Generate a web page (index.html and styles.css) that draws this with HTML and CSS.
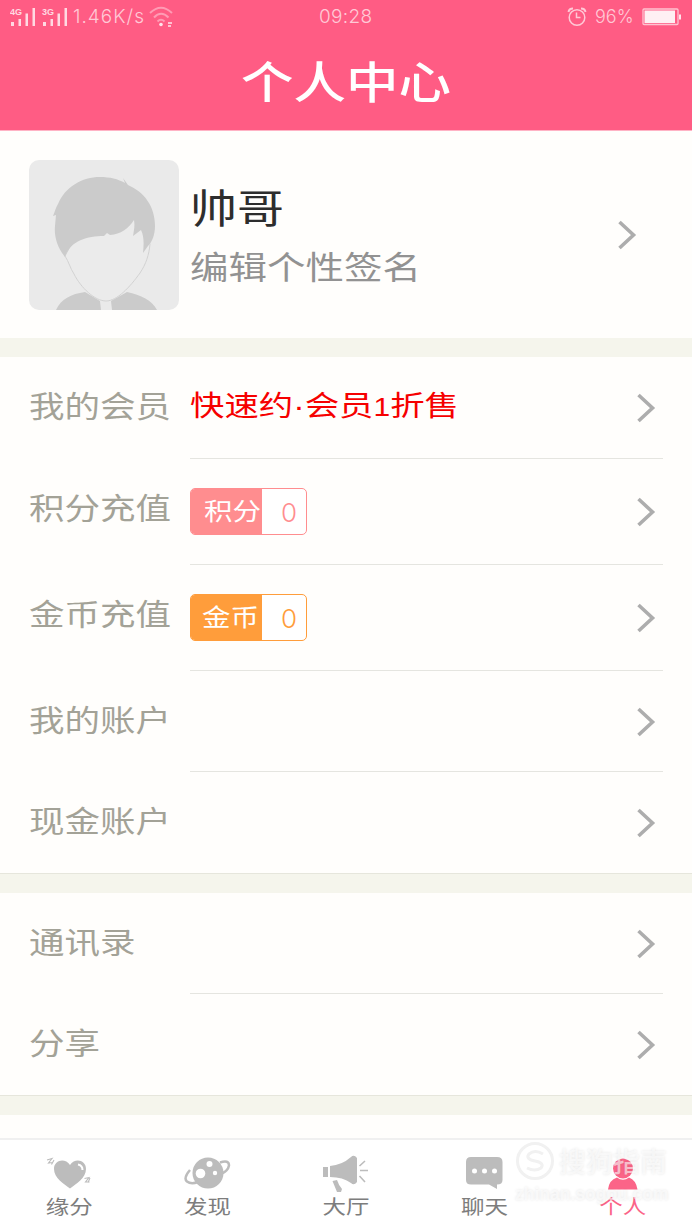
FILE: index.html
```html
<!DOCTYPE html>
<html lang="zh-CN">
<head>
  <meta charset="UTF-8">
  <title>个人中心</title>
  <link rel="stylesheet" href="styles.css">
</head>
<body>
<svg class="defs" width="0" height="0">
  <symbol id="arrow" viewBox="0 0 22 34">
    <path d="M3.500 4L17.500 17L3.500 30" fill="none" stroke="#adadad" stroke-width="3.600"/>
  </symbol>
</svg>

<header>
  <div class="status">
    <svg class="signal" width="66" height="30" viewBox="0 0 66 30">
      <g fill="#ffd9e2">
        <text x="0" y="13">4G</text>
        <rect x="1" y="20" width="3" height="4"/>
        <rect x="8.500" y="17" width="2.500" height="7"/>
        <rect x="15.500" y="11.500" width="2.500" height="12.500"/>
        <rect x="22.500" y="6" width="2.500" height="18"/>
        <text x="32" y="13">3G</text>
        <rect x="33" y="20" width="3" height="4"/>
        <rect x="40.500" y="17" width="2.500" height="7"/>
        <rect x="47.500" y="11.500" width="2.500" height="12.500"/>
        <rect x="54.500" y="6" width="2.500" height="18"/>
      </g>
    </svg>
    <span class="speed">1.46K/s</span>
    <svg class="wifi" width="26" height="22" viewBox="0 0 26 22">
      <g fill="none" stroke="#ff9bb4" stroke-width="2">
        <path d="M1 7Q12 -3.500 23 7"/>
        <path d="M5 11.500Q12 4 19.500 11.500"/>
        <path d="M8.500 15.500Q12 12 15.500 15.500"/>
      </g>
      <circle cx="12" cy="18.500" r="1.800" fill="#ffe3ea"/>
      <path d="M19 17h4M19 20h3" stroke="#ffe3ea" stroke-width="1.500"/>
    </svg>
    <span class="clock">09:28</span>
    <svg class="alarm" width="20" height="20" viewBox="0 0 20 20">
      <g fill="none" stroke="#ffc9d6" stroke-width="1.500">
        <circle cx="10" cy="10.500" r="7.800"/>
        <path d="M9.500 5.500V10.500H13.500"/>
        <path d="M1.500 5Q2 1.500 6 1.500M18.500 5Q18 1.500 14 1.500" stroke-width="2"/>
      </g>
    </svg>
    <span class="percent">96%</span>
    <svg class="battery" width="40" height="18" viewBox="0 0 40 18">
      <rect x="1" y="1" width="35" height="15.500" rx="1" fill="none" stroke="#ffc3d1" stroke-width="1.300"/>
      <rect x="2.500" y="2.500" width="30.500" height="12.500" fill="#fff0f3"/>
      <path d="M38 6.500v5" stroke="#ffe3ea" stroke-width="2"/>
    </svg>
  </div>
  <h1><span class="li">个人中心</span></h1>
</header>

<section class="profile">
  <svg class="avatar" width="150" height="150" viewBox="0 0 150 150">
    <rect width="150" height="150" fill="#eaeaea"/>
    <path d="M27 150C32 139 42 134 56 132L71 141L72 150ZM83 150L82 141L98 132C112 135 123 140 128 150Z" fill="#cbcbcb"/>
    <path d="M36 96C40 102 41 108 45 114C52 128 66 141 77 141C88 141 101 127 111 113C117 104 120 95 121 84L105 55L50 70Z" fill="#ebebeb" stroke="#d2d2d2" stroke-width="1"/>
    <path d="M24 56C26 51 27 47 29 44C36 27 53 17 71 17C81 17 89 19 96 23L94 18L99 25C115 32 126 46 126 66C126 75 123 82 119 86L114 93C115 84 115 76 112 70L104 76C105 70 106 66 105 60C99 69 92 74 81 75L78 73L75 76C58 76 41 81 36 97C28 87 25 76 26 66L27 55Z" fill="#cbcbcb"/>
  </svg>
  <div class="who">
    <div class="name"><span class="li">帅哥</span></div>
    <div class="sign"><span class="li">编辑个性签名</span></div>
  </div>
  <svg class="arrow"><use href="#arrow"/></svg>
</section>

<section class="list account">
  <div class="row">
    <div class="label"><span class="li">我的会员</span></div>
    <div class="value promo"><span class="li">快速约<span class="dot">·</span>会员<span class="one">1</span>折售</span></div>
    <svg class="arrow"><use href="#arrow"/></svg>
  </div>
  <div class="row tall">
    <div class="label"><span class="li">积分充值</span></div>
    <div class="value">
      <div class="badge points"><b><span class="li">积分</span></b><i>0</i></div>
    </div>
    <svg class="arrow"><use href="#arrow"/></svg>
  </div>
  <div class="row tall">
    <div class="label"><span class="li">金币充值</span></div>
    <div class="value">
      <div class="badge coins"><b><span class="li">金币</span></b><i>0</i></div>
    </div>
    <svg class="arrow"><use href="#arrow"/></svg>
  </div>
  <div class="row">
    <div class="label"><span class="li">我的账户</span></div>
    <div class="value"></div>
    <svg class="arrow"><use href="#arrow"/></svg>
  </div>
  <div class="row">
    <div class="label"><span class="li">现金账户</span></div>
    <div class="value"></div>
    <svg class="arrow"><use href="#arrow"/></svg>
  </div>
</section>

<section class="list">
  <div class="row">
    <div class="label"><span class="li">通讯录</span></div>
    <div class="value"></div>
    <svg class="arrow"><use href="#arrow"/></svg>
  </div>
  <div class="row">
    <div class="label"><span class="li">分享</span></div>
    <div class="value"></div>
    <svg class="arrow"><use href="#arrow"/></svg>
  </div>
</section>

<section class="rest"></section>

<nav>
  <a>
    <svg width="50" height="40" viewBox="0 0 50 40">
      <path d="M26 35.500C20 31 10 25 10 16C10 7 21 4.500 26 12C31 4.500 42 7 42 16C42 25 32 31 26 35.500Z" fill="#bcbcbc"/>
      <path d="M34 11.500Q38.500 12.500 38.500 17" fill="none" stroke="#fff" stroke-width="2"/>
      <path d="M3 7l5-1.500l-3.500 4.500l4-.5M10 7l-2.500 4.500M40.500 25.500l4.500-1l-3.500 4.500l4 0M46 25l-2 4.500" fill="none" stroke="#bcbcbc" stroke-width="1.100"/>
    </svg>
    <span class="li">缘分</span>
  </a>
  <a>
    <svg width="50" height="40" viewBox="0 0 50 40">
      <circle cx="25" cy="20" r="15.500" fill="#bcbcbc"/>
      <path d="M7 17Q0 25 4 28.500Q8 31.500 15 29M37 9.500Q46 6.500 46 12.500Q45 18 38 21" fill="none" stroke="#bcbcbc" stroke-width="2.500"/>
      <g fill="#fff"><circle cx="17.500" cy="20.500" r="4.800"/><circle cx="26.500" cy="11" r="3"/><circle cx="32" cy="20" r="2.200"/></g>
    </svg>
    <span class="li">发现</span>
  </a>
  <a>
    <svg width="50" height="40" viewBox="0 0 50 40">
      <g fill="#bcbcbc">
        <rect x="2" y="14" width="5" height="10"/>
        <path d="M9 13Q21 12 30 4Q33 1 36 5V29Q33 33 30 30Q22 24 9 24ZM11.500 28L16 27Q18 33 21 36L20 39L16 39Z"/>
      </g>
      <path d="M38.500 13L44 8M39 17.500H47M38.500 23L44 29" stroke="#bcbcbc" stroke-width="1.600"/>
    </svg>
    <span class="li">大厅</span>
  </a>
  <a>
    <svg width="50" height="40" viewBox="0 0 50 40">
      <path d="M12 4H38Q43.500 4 43.500 9V27Q43.500 31.500 38 31.500V36L30 31.500H12Q7 31.500 7 27V9Q7 4 12 4Z" fill="#bcbcbc"/>
      <g fill="#fff"><circle cx="15.500" cy="18" r="2.500"/><circle cx="25.500" cy="18" r="2.500"/><circle cx="35.500" cy="18" r="2.500"/></g>
    </svg>
    <span class="li">聊天</span>
  </a>
  <a class="on">
    <svg width="50" height="40" viewBox="0 0 50 40">
      <g fill="#fb6488">
        <circle cx="25" cy="15.500" r="10"/>
        <path d="M10 36.500Q11 27 19 24.500Q25 29 31 24.500Q38 27 39.500 36.500Z"/>
      </g>
    </svg>
    <span class="li">个人</span>
  </a>
</nav>

<div class="mark">
  <svg width="40" height="40" viewBox="0 0 40 40">
    <circle cx="20" cy="20" r="17.500" fill="none" stroke="#f1f1f1" stroke-width="3"/>
    <path d="M28 13Q20 8 14 13Q10 18 20 20Q30 22 26 27Q20 31 12 27" fill="none" stroke="#f1f1f1" stroke-width="3"/>
  </svg>
  <span class="mark-name">搜狗指南</span>
  <span class="mark-url">zhinan.sogou.com</span>
</div>
</body>
</html>
```
FILE: styles.css
```css
* { box-sizing: border-box; }
body {
  margin: 0;
  width: 692px;
  height: 1230px;
  overflow: hidden;
  position: relative;
  display: flex;
  flex-direction: column;
  background: #f5f5ec;
  font-family: "Noto Sans CJK SC", sans-serif;
  color: #a3a297;
}
.defs { position: absolute; }

/* wide, flat lettering */
.li {
  display: inline-block;
  transform: scaleY(0.84);
  white-space: nowrap;
}

header {
  height: 131px;
  background: #ff5c84;
  border-bottom: 1px solid #ffb3c5;
}
.status {
  height: 34px;
  padding: 0 10px;
  display: flex;
  align-items: center;
  font-family: Inter, sans-serif;
  font-weight: 300;
  font-size: 19px;
  line-height: 34px;
  color: #ffc9d6;
}
.signal { margin-right: -3px; }
.signal text {
  font-family: "Liberation Sans", sans-serif;
  font-size: 9px;
  font-weight: bold;
}
.speed { width: 76px; letter-spacing: 1px; }
.wifi { margin-left: 0; }
.clock { margin-left: 144px; width: 58px; letter-spacing: 0.3px; }
.alarm { margin-left: 190px; }
.percent { margin-left: 8px; width: 40px; font-size: 18px; }
.battery { margin-left: 7px; }
h1 {
  margin: 0;
  height: 96px;
  line-height: 93px;
  text-align: center;
  font-size: 52.5px;
  font-weight: 500;
  color: #fff;
}

.profile {
  height: 207px;
  padding: 0 54px 0 29px;
  display: flex;
  align-items: center;
  background: #fffefc;
}
.avatar { border-radius: 10px; }
.who { flex: 1; margin-left: 11px; }
.name {
  height: 57px;
  line-height: 57px;
  font-size: 47px;
  color: #2d2d2d;
}
.sign {
  height: 58px;
  line-height: 62px;
  font-size: 38.5px;
  color: #929292;
}
.arrow { width: 22px; height: 34px; flex: none; }

.list {
  margin-top: 19px;
  background: #fffefc;
  border-bottom: 1px solid #e6e6dc;
}
.row {
  height: 101px;
  padding-left: 29px;
  padding-right: 35px;
  display: flex;
  align-items: center;
  background: linear-gradient(#e5e5e0, #e5e5e0) 190px 100% / 473px 1px no-repeat;
}
.account .row:first-child { height: 102px; }
.row:last-child { background: none; }
.row.tall { height: 106px; }
.label {
  width: 161px;
  line-height: 50px;
  margin-top: -8px;
  font-size: 35.5px;
}
.tall .label { margin-top: -12px; }
.value { flex: 1; line-height: 50px; }
.promo {
  margin-top: -6px;
  font-size: 34.4px;
  color: #f60000;
}
.dot, .one { font-family: "Liberation Sans", sans-serif; }
.one { font-size: 30px; }

.badge {
  display: flex;
  width: 117px;
  height: 47px;
  margin-top: -2px;
  overflow: hidden;
  border: 1px solid;
  border-radius: 5px;
  background: #fff;
  line-height: 41px;
}
.badge b {
  width: 71px;
  padding-left: 13px;
  font-size: 28.5px;
  font-weight: 400;
}
.badge b .li { color: #fff; }
.badge i {
  flex: 1;
  text-align: center;
  font: 300 26px/47px Inter, sans-serif;
  padding-left: 10px;
}
.points { color: #ff8d8f; }
.points b { background: #ff8d8f; }
.coins { color: #ff9d3b; }
.coins b { background: #ff9d3b; padding-left: 11px; }

.rest {
  margin-top: 19px;
  height: 23px;
  background: #fffefc;
}
nav {
  flex: 1;
  display: flex;
  background: #fff;
  border-top: 2px solid #f0f0f0;
}
nav a {
  flex: 1;
  padding-top: 13px;
  display: flex;
  flex-direction: column;
  align-items: center;
  font-size: 23.5px;
  line-height: 26px;
  color: #7d7d7d;
}
nav .on { color: #fb6488; }

.mark {
  position: absolute;
  left: 515px;
  top: 1141px;
  width: 160px;
  display: grid;
  grid-template-columns: 44px 1fr;
  align-items: center;
  color: rgba(255, 255, 255, 0.6);
  text-shadow: 0 0 3px rgba(0, 0, 0, 0.1);
}
.mark-name { font-size: 27px; line-height: 40px; font-weight: 500; }
.mark-url {
  grid-column: 1 / 3;
  font: bold 17.5px/26px "Liberation Sans", sans-serif;
}
```
